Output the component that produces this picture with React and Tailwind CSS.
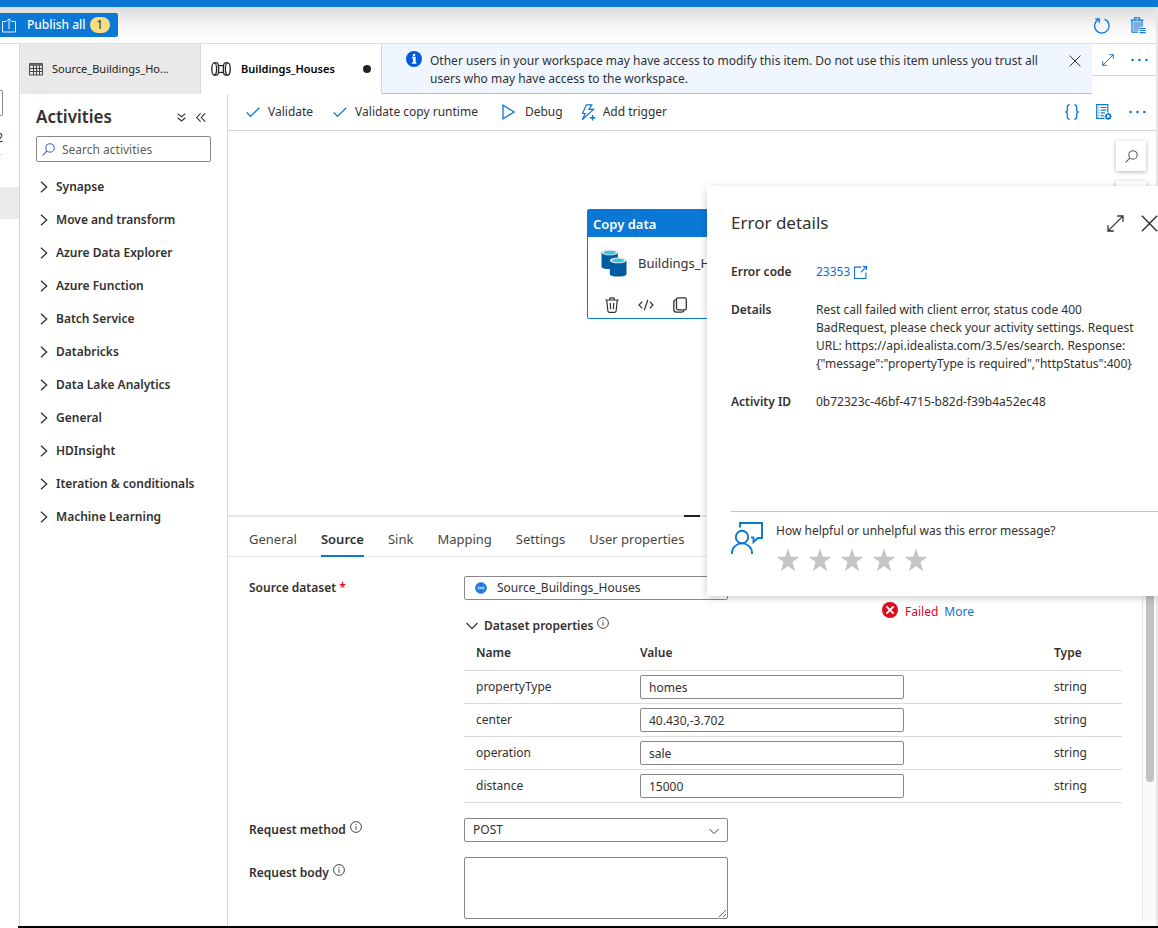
import React, { useState } from "react";

const activities = [
  "Synapse",
  "Move and transform",
  "Azure Data Explorer",
  "Azure Function",
  "Batch Service",
  "Databricks",
  "Data Lake Analytics",
  "General",
  "HDInsight",
  "Iteration & conditionals",
  "Machine Learning",
];

const detailTabs = ["General", "Source", "Sink", "Mapping", "Settings", "User properties"];

const datasetProperties = [
  { name: "propertyType", value: "homes", type: "string" },
  { name: "center", value: "40.430,-3.702", type: "string" },
  { name: "operation", value: "sale", type: "string" },
  { name: "distance", value: "15000", type: "string" },
];

function Svg({ w, h, children, className = "", stroke = 1 }) {
  return (
    <svg
      width={w}
      height={h}
      viewBox={`0 0 ${w} ${h}`}
      fill="none"
      stroke="currentColor"
      strokeWidth={stroke}
      className={`shrink-0 ${className}`}
      aria-hidden="true"
    >
      {children}
    </svg>
  );
}

const PublishIcon = () => (
  <Svg w={14} h={15} className="text-white/90">
    <path d="M4 3.5H.5v10.5h13V3.5H10M7 .8v10.4M4 3.8l3-3 3 3" />
  </Svg>
);

const RefreshIcon = () => (
  <Svg w={16} h={17} stroke={1.3}>
    <path d="M10.6 2.2A7.2 7.2 0 1 1 4.6 2.4M1.2 1.9h4v4" />
  </Svg>
);

const DiscardIcon = () => (
  <Svg w={16} h={17} stroke={1.2}>
    <path d="M.5 3.2h13M4.5 3V.9h5V3M2 3.2v12h6M12 3.2v6.5" />
    <path d="M4 5.200h6.200v5h-2v3H4z" fill="#7fa9e4" stroke="#7fa9e4" />
    <path d="M9.500 11.500h6M9.500 13.500h6M9.500 15.700h6" />
  </Svg>
);

const TableIcon = () => (
  <Svg w={14} h={13} className="text-[#484644]">
    <path d="M.5.5h13v11.500H.5zM.5 5.500h13M.5 8.500h13M4.500 2v10M7.500 2v10M10.500 2v10" />
    <path d="M.5 1.700h13" stroke="#6b6967" strokeWidth={2.4} />
  </Svg>
);

const PipelineIcon = () => (
  <Svg w={20} h={14} stroke={1.3} className="text-[#222]">
    <ellipse cx="3.200" cy="7" rx="2.400" ry="6.100" />
    <ellipse cx="16.800" cy="7" rx="2.400" ry="6.100" />
    <path d="M3.200.9h2.500c1 0 1.300.8 1.500 1.700.2.700.7 1.100 1.400 1.100h2.800c.7 0 1.200-.400 1.400-1.100.2-.900.5-1.700 1.500-1.700h2.500M3.200 13.100h2.500c1 0 1.300-.800 1.500-1.700.2-.7.7-1.100 1.400-1.100h2.800c.7 0 1.200.4 1.400 1.100.2.9.5 1.700 1.500 1.700h2.500" />
    <path d="M7.400 3.200c.4 2.400.4 5.200 0 7.600M12.600 3.200c-.4 2.400-.4 5.200 0 7.600" />
  </Svg>
);

const InfoSolid = () => (
  <svg width="16" height="16" viewBox="0 0 16 16" className="shrink-0" aria-hidden="true">
    <circle cx="8" cy="8" r="8" fill="#015cda" />
    <circle cx="8" cy="4" r="1.300" fill="#fff" />
    <path d="M6 6.500h3v5.500h1.200M5.800 12.200h4.600" stroke="#fff" strokeWidth="1.300" fill="none" />
    <path d="M7 6.500h2v5.500H7z" fill="#fff" />
  </svg>
);

const InfoOutline = () => (
  <Svg w={12} h={12} stroke={0.9}>
    <circle cx="6" cy="6" r="5.400" />
    <path d="M6 5.200v3.600M6 3.200v1.100" />
  </Svg>
);

const CloseIcon = ({ size = 12 }) => (
  <svg width={size} height={size} viewBox="0 0 12 12" className="shrink-0" aria-hidden="true">
    <path d="M.6.6l10.800 10.800M11.400.6L.6 11.400" stroke="currentColor" strokeWidth="1" />
  </svg>
);

const ExpandIcon = ({ size = 12, stroke = 1 }) => (
  <svg
    width={size}
    height={size}
    viewBox="0 0 12 12"
    fill="none"
    stroke="currentColor"
    strokeWidth={stroke}
    className="shrink-0"
    aria-hidden="true"
  >
    <path d="M.8 11.200L11.200.8M7.200.7h4.100v4.100M.7 7.200v4.100h4.100" />
  </svg>
);

const DotsIcon = () => (
  <svg width="17" height="4" viewBox="0 0 17 4" fill="currentColor" className="shrink-0" aria-hidden="true">
    <circle cx="1.600" cy="2" r="1.300" />
    <circle cx="8.500" cy="2" r="1.300" />
    <circle cx="15.400" cy="2" r="1.300" />
  </svg>
);

const CheckIcon = () => (
  <Svg w={14} h={11} className="text-[#0a78d4]" stroke={1.3}>
    <path d="M.6 5.400l3.900 4L13.300.8" />
  </Svg>
);

const PlayIcon = () => (
  <Svg w={13} h={16} className="text-[#0a78d4]" stroke={1.3}>
    <path d="M1 1.200v13.600L12 8z" />
  </Svg>
);

const TriggerIcon = () => (
  <Svg w={15} h={17} className="text-[#0a78d4]" stroke={1.2}>
    <path d="M5.300.8h5.500L8 5.400h4.500L1.200 15.700l3.100-6.200H1.600z" />
    <path d="M8.800 13.700h5.600M11.600 10.900v5.600" strokeWidth={1.400} />
  </Svg>
);

const BracesIcon = () => (
  <Svg w={14} h={16} stroke={1.300}>
    <path d="M4.800.8H4C2.900.8 2.400 1.400 2.400 2.500v3.200C2.400 7 1.800 7.700.5 8c1.300.3 1.900 1 1.900 2.300v3.200c0 1.100.5 1.700 1.600 1.700h.8M9.200.8h.8c1.100 0 1.600.6 1.600 1.700v3.200c0 1.300.6 2 1.900 2.300-1.300.3-1.900 1-1.900 2.300v3.200c0 1.100-.5 1.700-1.600 1.700h-.8" />
  </Svg>
);

const ListGearIcon = () => (
  <Svg w={16} h={16} stroke={1.200}>
    <path d="M8.500 14.400H.7V.7h11.100v7.800" />
    <path d="M2.500 3.500h1M4.800 3.500h5.400M2.500 6.200h1M4.800 6.200h5.400M2.500 8.900h1M4.800 8.900h4M2.500 11.600h1M4.800 11.600h3" />
    <circle cx="12.200" cy="12.400" r="2.100" strokeWidth={1.500} />
    <path d="M12.200 8.900v1.400M12.200 14.500v1.400M8.700 12.400h1.400M14.300 12.400h1.400M9.700 9.900l1 1M13.700 13.900l1 1M14.700 9.900l-1 1M10.700 13.900l-1 1" />
  </Svg>
);

const SearchIcon = () => (
  <Svg w={13} h={13} stroke={1.100}>
    <circle cx="8" cy="4.900" r="4.200" />
    <path d="M5.100 7.900L.6 12.400" />
  </Svg>
);

const ChevronRight = () => (
  <Svg w={8} h={12} stroke={1.300}>
    <path d="M1 .7L6.700 6 1 11.300" />
  </Svg>
);

const ChevronDown = ({ w = 12, h = 8 }) => (
  <svg width={w} height={h} viewBox="0 0 12 8" fill="none" className="shrink-0" aria-hidden="true">
    <path d="M.6 1l5.400 5.600L11.400 1" stroke="currentColor" strokeWidth="1.200" />
  </svg>
);

const DoubleDown = () => (
  <Svg w={9} h={9} stroke={1.100}>
    <path d="M.6.6l3.900 3.200L8.400.6M.6 4.800L4.500 8l3.900-3.200" />
  </Svg>
);

const DoubleLeft = () => (
  <Svg w={10} h={9} stroke={1.100}>
    <path d="M4.600.4L.8 4.500l3.800 4.100M9.100.4L5.300 4.500l3.800 4.100" />
  </Svg>
);

const DatabaseCopyIcon = () => (
  <svg width="26" height="28" viewBox="0 0 26 28" className="shrink-0" aria-hidden="true">
    <path d="M.5 3v14.500C.5 19.400 4 20 8.800 20s8-.600 8-2.500V3z" fill="#005ba1" />
    <ellipse cx="8.700" cy="3.400" rx="8.200" ry="2.900" fill="#e8e8e8" />
    <ellipse cx="8.700" cy="3.600" rx="6.200" ry="1.900" fill="#32c8e8" />
    <path d="M8.800 11.500V25c0 1.800 3.500 2.600 8.300 2.600s8.400-.800 8.400-2.600V11.500z" fill="#005ba1" />
    <ellipse cx="17.100" cy="11.400" rx="8.300" ry="2.900" fill="#e8e8e8" />
    <ellipse cx="17.100" cy="11.500" rx="6.200" ry="1.900" fill="#32c8e8" />
  </svg>
);

const TrashIcon = () => (
  <Svg w={14} h={16} stroke={1.200}>
    <path d="M.3 3h13.400M4.800 2.800V1.600c0-.5.4-.8.8-.8h2.800c.4 0 .8.300.8.800v1.200M1.700 3l1.200 11c.1.800.7 1.300 1.500 1.300h5.200c.8 0 1.400-.5 1.500-1.300L12.300 3M5.300 6l.3 6.200M8.700 6l-.3 6.200" />
  </Svg>
);

const CodeIcon = () => (
  <Svg w={16} h={12} stroke={1.200}>
    <path d="M4.200 2.700L1 6l3.200 3.300M11.800 2.700L15 6l-3.200 3.300M9.800.8L6.300 11.200" />
  </Svg>
);

const CopyIcon = () => (
  <Svg w={14} h={16} stroke={1.300}>
    <rect x="3.500" y=".8" width="9.800" height="12" rx="1.600" />
    <path d="M3.400 2.600C1.700 2.900.8 3.600.8 5v7.200c0 2 1.100 3 3 3h4.800c1.300 0 2.100-.600 2.500-1.700" />
  </Svg>
);

const OpenIcon = () => (
  <svg width="13" height="13" viewBox="0 0 12 12" fill="none" stroke="currentColor" className="shrink-0" aria-hidden="true">
    <path d="M6.500 1H.5v10.500h10.500V6M8 .6h3.500V4M11.500.6L6.300 5.800" />
  </svg>
);

const RestIcon = () => (
  <svg width="12" height="12" viewBox="0 0 12 12" className="shrink-0" aria-hidden="true">
    <circle cx="6" cy="6" r="5.800" fill="#1273d8" />
    <path d="M.4 4.300h11.200M.4 7.700h11.200M4 .5v11M8 .5v11" stroke="#5ea3ec" strokeWidth=".6" />
    <path d="M2.800 6h1.700M5.200 6h1.600M7.500 6h1.700" stroke="#fff" strokeWidth="1.300" />
  </svg>
);

const FeedbackIcon = () => (
  <Svg w={32} h={32} stroke={1.900} className="text-[#0a78d4]">
    <path d="M9 5.500V1h22v15h-4.200L22.500 20v-4.500H20" />
    <circle cx="11" cy="15" r="6.200" />
    <path d="M1 32v-1c0-5.600 4.500-9.600 10-9.600s10 4 10 9.600v1" />
  </Svg>
);

const StarIcon = () => (
  <svg width="24" height="24" viewBox="0 0 24 24" className="shrink-0" aria-hidden="true">
    <path
      d="M12 .5l2.800 8.300h8.700l-7 5.200 2.800 9.500-7.300-5.600-7.300 5.600L7.500 14l-7-5.200h8.700z"
      fill="#c8c6c4"
    />
  </svg>
);

const FailedIcon = () => (
  <svg width="16" height="16" viewBox="0 0 16 16" className="shrink-0" aria-hidden="true">
    <circle cx="8" cy="8" r="8" fill="#e00b1c" />
    <path d="M4.400 4.400l7.200 7.200M11.600 4.400l-7.200 7.200" stroke="#fff" strokeWidth="2" />
  </svg>
);

function TopBar() {
  return (
    <header className="flex h-[37px] items-center justify-between border-b border-[#dcdcdc] bg-linear-to-b from-[#dcdcdc] via-[#f8f8f8] via-60% to-white pr-2.5">
      <button className="flex h-6 items-center rounded-r-xs bg-[#0a78d4] pr-2 pl-0.5 text-white">
        <PublishIcon />
        <span className="ml-[11px] font-medium">Publish all</span>
        <span className="ml-1 flex h-4 w-5 items-center justify-center rounded-full bg-[#f8dc7e] text-[#323130]">
          1
        </span>
      </button>
      <div className="flex items-center gap-5 text-[#0a78d4]">
        <button aria-label="Refresh"><RefreshIcon /></button>
        <button aria-label="Discard all"><DiscardIcon /></button>
      </div>
    </header>
  );
}

function ResourceRail() {
  return (
    <aside className="w-5 shrink-0 overflow-hidden border-r border-[#d6d6d6]">
      <div className="mt-[46px] h-[26px] w-[3px] rounded-r-xs border border-l-0 border-[#8a8886]" />
      <div className="mt-[13px] flex h-[26px] w-[3px] justify-end border-b border-[#e1dfdd]">2</div>
      <div className="mt-8 h-8 bg-[#edebe9]" />
    </aside>
  );
}

function TabStrip() {
  return (
    <div className="flex h-[50px]">
      <div role="tablist" className="flex shrink-0">
        <button role="tab" aria-selected="false" className="flex w-[181px] items-center border-r border-[#d6d6d6] bg-[#e9e9e9] pl-[9px] text-[11px] text-[#1b1a19]">
          <TableIcon />
          <span className="ml-[9px]">Source_Buildings_Ho...</span>
        </button>
        <button role="tab" aria-selected="true" className="flex w-[181px] items-center border-r border-[#d6d6d6] pr-2.5 pl-2.5 text-[11px] font-semibold text-black">
          <PipelineIcon />
          <span className="ml-2.5">Buildings_Houses</span>
          <span className="ml-auto size-2 rounded-full bg-[#222]" />
        </button>
      </div>
      <div className="flex flex-1 items-start border-b border-[#bdbdbd] bg-[#eff6ff] pt-[7px] pr-[11px] pl-6">
        <InfoSolid />
        <p className="ml-2 flex-1 pt-px leading-[18px]">
          Other users in your workspace may have access to modify this item. Do not use this item unless you trust all
          users who may have access to the workspace.
        </p>
        <button aria-label="Dismiss" className="mt-1 ml-3"><CloseIcon /></button>
      </div>
      <div className="flex h-8 w-16 shrink-0 items-center justify-between border-b border-[#d6d6d6] pr-2 pl-2.5 text-[#0a78d4]">
        <button aria-label="Expand"><ExpandIcon /></button>
        <button aria-label="More tabs"><DotsIcon /></button>
      </div>
    </div>
  );
}

function ActivitiesPanel() {
  return (
    <nav className="w-52 shrink-0 border-r border-[#d6d6d6] px-4 pt-2.5">
      <div className="flex h-[26px] items-center">
        <h2 className="text-[17px] font-semibold">Activities</h2>
        <button aria-label="Expand all" className="ml-auto"><DoubleDown /></button>
        <button aria-label="Collapse panel" className="mr-[5px] ml-2.5"><DoubleLeft /></button>
      </div>
      <label className="mt-1.5 flex h-[26px] items-center rounded-xs border border-[#8a8886] pl-[5px]">
        <span className="text-[#4666d8]"><SearchIcon /></span>
        <input
          aria-label="Search activities"
          placeholder="Search activities"
          className="ml-[7px] w-full min-w-0 pt-0.5 outline-none placeholder:text-[#605e5c]"
        />
      </label>
      <ul className="mt-2">
        {activities.map((name) => (
          <li key={name}>
            <button className="flex h-[33px] items-center gap-2 pl-1 font-semibold whitespace-nowrap">
              <ChevronRight />
              {name}
            </button>
          </li>
        ))}
      </ul>
    </nav>
  );
}

function Toolbar() {
  return (
    <div className="flex h-[37px] items-center border-b border-[#d6d6d6] pr-2.5 pl-[18px]">
      <button className="flex items-center gap-2"><CheckIcon />Validate</button>
      <button className="ml-5 flex items-center gap-2"><CheckIcon />Validate copy runtime</button>
      <button className="ml-6 flex items-center gap-2.5"><PlayIcon />Debug</button>
      <button className="ml-[18px] flex items-center gap-[7px]"><TriggerIcon />Add trigger</button>
      <div className="ml-auto flex items-center gap-[17px] text-[#0a78d4]">
        <button aria-label="View code"><BracesIcon /></button>
        <button aria-label="Pipeline properties"><ListGearIcon /></button>
        <button aria-label="More actions"><DotsIcon /></button>
      </div>
    </div>
  );
}

function Canvas() {
  return (
    <section aria-label="Pipeline canvas" className="relative min-h-[385px] flex-1 border-b-2 border-[#e6e6e6]">
      <div className="absolute top-[78px] left-[359px] w-48 rounded-xs border border-[#0a78d4] bg-white">
        <h3 className="flex h-[27px] items-center bg-[#0a78d4] pl-[5px] text-[13px] font-semibold text-white">Copy data</h3>
        <div className="flex h-[52px] items-center gap-[11px] pl-[13px] text-[13px]">
          <DatabaseCopyIcon />
          <span>Buildings_Houses</span>
        </div>
        <div className="flex h-[29px] items-center gap-[19px] pt-0.5 pl-[17px]">
          <button aria-label="Delete"><TrashIcon /></button>
          <button aria-label="Code"><CodeIcon /></button>
          <button aria-label="Clone"><CopyIcon /></button>
        </div>
      </div>
      <div className="absolute top-2.5 right-2.5 flex flex-col gap-2.5 text-[#605e5c]">
        <button aria-label="Search canvas" className="flex size-[30px] items-center justify-center bg-white shadow-[0_1px_4px_rgba(0,0,0,0.3)]">
          <SearchIcon />
        </button>
        <button aria-label="Zoom in" className="size-[30px] bg-white shadow-[0_1px_4px_rgba(0,0,0,0.3)]" />
      </div>
      <div className="absolute -bottom-0.5 left-1/2 -ml-2 h-0.5 w-4 bg-[#222]" />
    </section>
  );
}

function DetailTabs() {
  return (
    <div role="tablist" className="flex h-10 gap-6 border-b border-[#e6e6e6] pl-[21px] text-[13px]">
      {detailTabs.map((name) => (
        <button
          key={name}
          role="tab"
          aria-selected={name === "Source"}
          className={
            name === "Source"
              ? "-mb-px border-b-2 border-[#0a78d4] pt-1.5 font-semibold"
              : "-mb-px border-b-2 border-transparent pt-1.5 text-[#484644]"
          }
        >
          {name}
        </button>
      ))}
    </div>
  );
}

function SourceForm() {
  const [rows, setRows] = useState(datasetProperties);
  const update = (index, value) => setRows(rows.map((row, i) => (i === index ? { ...row, value } : row)));

  return (
    <div className="flex">
      <form className="min-w-0 flex-1 pt-[19px] pr-5 pb-[7px] pl-[21px]">
        <div className="flex items-start">
          <label htmlFor="dataset" className="w-[215px] shrink-0 leading-6 font-semibold">
            Source dataset <span className="text-[#e00b1c]">*</span>
          </label>
          <div className="w-[264px] shrink-0">
            <div className="flex h-6 items-center rounded-xs border border-[#8a8886] pl-2.5">
              <RestIcon />
              <input id="dataset" defaultValue="Source_Buildings_Houses" className="ml-2.5 w-full min-w-0 outline-none" />
            </div>
            <div className="mt-4 flex h-5 items-center pl-0.5">
              <button type="button" className="flex items-center gap-1.5 font-semibold">
                <ChevronDown />
                Dataset properties
              </button>
              <button type="button" aria-label="About dataset properties" className="mb-1.5 ml-1"><InfoOutline /></button>
            </div>
          </div>
          <div className="mt-[26px] ml-[154px] flex items-start">
            <FailedIcon />
            <span className="ml-[7px] pt-px text-[#e00b1c]">Failed</span>
            <a href="#more" className="ml-1.5 pt-px text-[#0f6fd4]">More</a>
          </div>
        </div>

        <div className="ml-[215px]">
          <table className="w-full table-fixed text-left">
            <thead>
              <tr className="h-[35px] border-b border-[#dcdcdc]">
                <th className="w-44 pl-3 font-semibold">Name</th>
                <th className="font-semibold">Value</th>
                <th className="w-[68px] font-semibold">Type</th>
              </tr>
            </thead>
            <tbody>
              {rows.map((row, index) => (
                <tr key={row.name} className="h-[33px] border-b border-[#dcdcdc]">
                  <td className="pl-3">{row.name}</td>
                  <td>
                    <input
                      aria-label={row.name}
                      value={row.value}
                      onChange={(event) => update(index, event.target.value)}
                      className="block h-6 w-[264px] rounded-xs border border-[#8a8886] px-2 outline-none"
                    />
                  </td>
                  <td>{row.type}</td>
                </tr>
              ))}
            </tbody>
          </table>
        </div>

        <div className="mt-[15px] flex items-start">
          <div className="flex h-6 w-[215px] shrink-0 items-center">
            <label htmlFor="method" className="font-semibold">Request method</label>
            <button type="button" aria-label="About request method" className="mb-1.5 ml-1"><InfoOutline /></button>
          </div>
          <div className="relative w-[264px]">
            <select id="method" className="h-6 w-full appearance-none rounded-xs border border-[#8a8886] px-2 outline-none">
              <option>POST</option>
              <option>GET</option>
            </select>
            <span className="pointer-events-none absolute top-2.5 right-[9px] text-[#484644]">
              <ChevronDown w={10} h={7} />
            </span>
          </div>
        </div>

        <div className="mt-[15px] flex items-start">
          <div className="mt-1 flex h-6 w-[215px] shrink-0 items-center">
            <label htmlFor="body" className="font-semibold">Request body</label>
            <button type="button" aria-label="About request body" className="mb-1.5 ml-1"><InfoOutline /></button>
          </div>
          <textarea id="body" className="block h-[62px] w-[264px] rounded-xs border border-[#8a8886] px-2 outline-none" />
        </div>
      </form>
      <div className="mb-[5px] w-[14px] shrink-0 border-l border-[#e6e6e6] bg-[#fafafa] pt-1 pl-[3px]">
        <div className="h-[221px] w-2 rounded-full bg-[#c1c1c1]" />
      </div>
    </div>
  );
}

function ErrorPanel() {
  return (
    <section
      role="dialog"
      aria-labelledby="error-title"
      className="absolute top-[186px] right-0 h-[410px] w-[451px] bg-white pt-[25px] pl-6 shadow-[0_2px_8px_rgba(0,0,0,0.2)]"
    >
      <div className="flex h-6 items-center">
        <h2 id="error-title" className="text-[17px]">Error details</h2>
        <button aria-label="Expand error details" className="ml-auto"><ExpandIcon size={17} stroke={0.9} /></button>
        <button aria-label="Close error details" className="ml-[17px]"><CloseIcon size={17} /></button>
      </div>
      <dl className="mt-7 grid grid-cols-[85px_1fr] gap-y-5 pr-4 leading-[18px]">
        <dt className="font-semibold">Error code</dt>
        <dd>
          <a href="#23353" className="inline-flex items-center gap-1 text-[#0f6fd4]">
            23353 <OpenIcon />
          </a>
        </dd>
        <dt className="font-semibold">Details</dt>
        <dd>
          Rest call failed with client error, status code 400 BadRequest, please check your activity settings. Request
          URL: https://api.idealista.com/3.5/es/search. Response: {'{"message":"propertyType is required","httpStatus":400}'}
        </dd>
        <dt className="font-semibold">Activity ID</dt>
        <dd>0b72323c-46bf-4715-b82d-f39b4a52ec48</dd>
      </dl>
      <div className="mt-[100px] flex border-t border-[#c4c4c4] pt-2.5">
        <FeedbackIcon />
        <div className="ml-[13px]">
          <p className="leading-[18px]">How helpful or unhelpful was this error message?</p>
          <div className="mt-2 flex gap-2">
            {[1, 2, 3, 4, 5].map((n) => (
              <button key={n} aria-label={`Rate ${n} of 5`}><StarIcon /></button>
            ))}
          </div>
        </div>
      </div>
    </section>
  );
}

export default function App() {
  return (
    <div className="relative flex min-h-screen flex-col overflow-hidden bg-white font-['Noto_Sans','Open_Sans',sans-serif] text-xs leading-[18px] text-[#323130]">
      <div className="h-[7px] bg-[#0a78d4]" />
      <div className="flex flex-1 flex-col border-r-2 border-[#e6e6e6]">
        <TopBar />
        <div className="flex flex-1">
          <ResourceRail />
          <div className="flex min-w-0 flex-1 flex-col">
            <TabStrip />
            <div className="flex flex-1">
              <ActivitiesPanel />
              <main className="flex min-w-0 flex-1 flex-col">
                <Toolbar />
                <Canvas />
                <DetailTabs />
                <SourceForm />
              </main>
            </div>
          </div>
        </div>
      </div>
      <div className="ml-[18px] h-0.5 bg-black" />
      <ErrorPanel />
    </div>
  );
}
